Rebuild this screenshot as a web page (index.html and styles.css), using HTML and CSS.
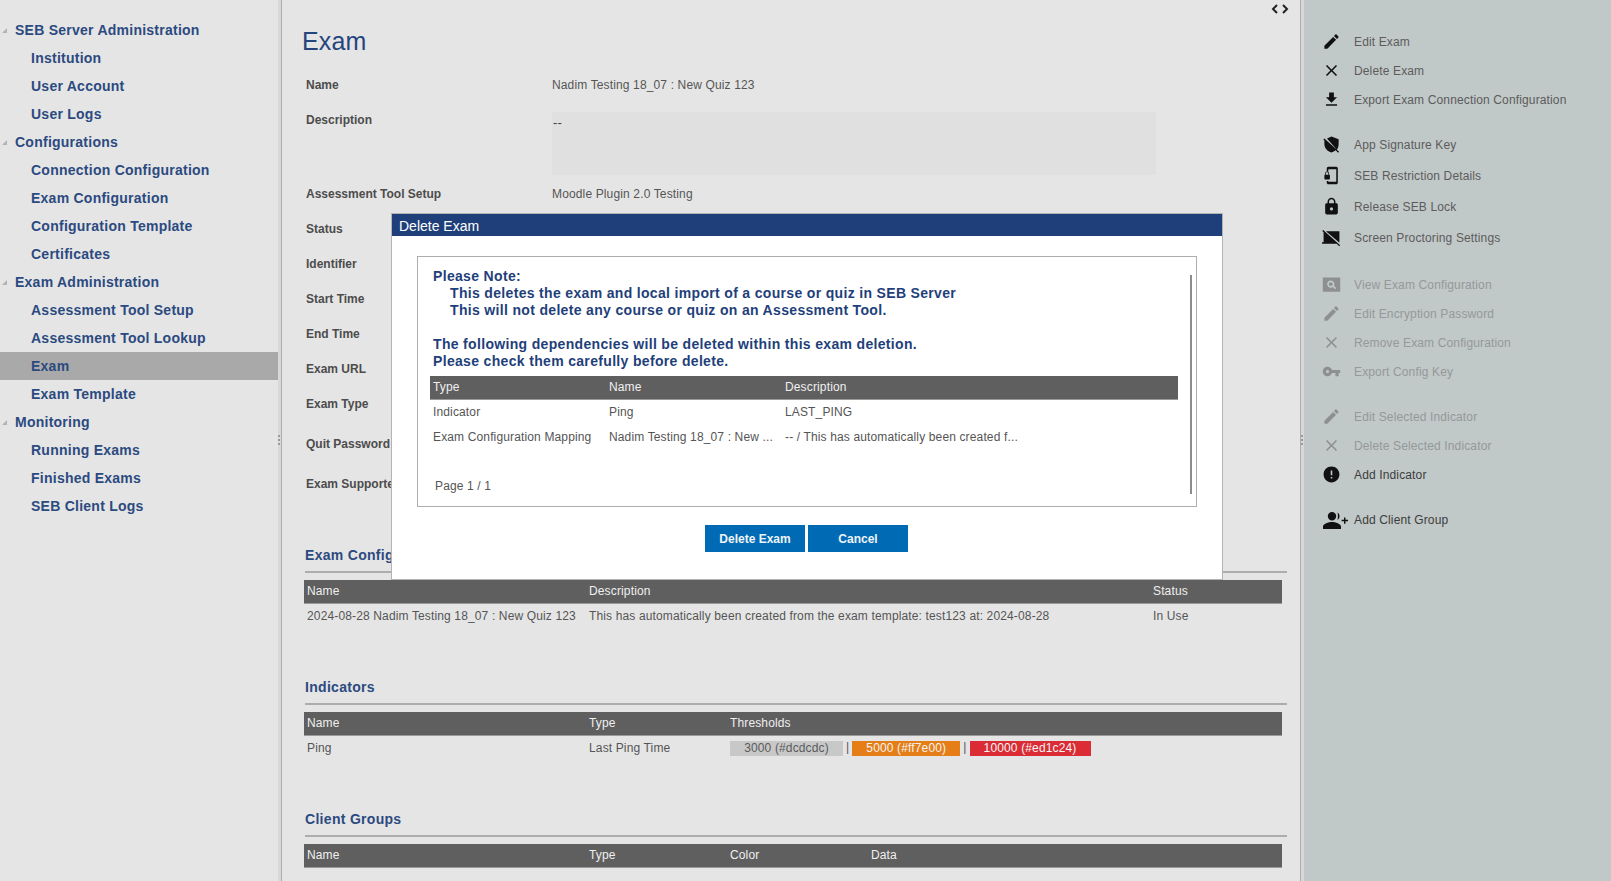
FILE: index.html
```html
<!DOCTYPE html>
<html lang="en">
<head>
    <meta charset="UTF-8">
    <title>SEB Server - Exam</title>
    <link rel="stylesheet" href="styles.css">
</head>
<body>
    <svg class="defs" width="0" height="0">
        <symbol id="i-edit" viewBox="0 0 24 24"><path d="M3 17.25V21h3.75L17.81 9.94l-3.75-3.75L3 17.25zM20.71 7.04c.39-.39.39-1.02 0-1.41l-2.34-2.34c-.39-.39-1.02-.39-1.41 0l-1.83 1.83 3.75 3.75 1.83-1.83z"/></symbol>
        <symbol id="i-close" viewBox="0 0 24 24"><path d="M19 6.41L17.59 5 12 10.59 6.41 5 5 6.41 10.59 12 5 17.59 6.41 19 12 13.41 17.59 19 19 17.59 13.41 12z"/></symbol>
        <symbol id="i-download" viewBox="0 0 24 24"><path d="M19 9h-4V3H9v6H5l7 7 7-7zM5 18v2h14v-2H5z"/></symbol>
        <symbol id="i-shield" viewBox="0 0 24 24"><path d="M12 2l9 3.5v6c0 2.800-.8 5.200-2.200 7.200L6.300 4.400zM3 4.300L1.700 5.600 3 7v4.500c0 5 3.800 9.500 9 10.500 2-.4 3.800-1.300 5.300-2.600l3 3 1.300-1.300z"/></symbol>
        <symbol id="i-phone" viewBox="0 0 24 24"><path d="M8 1h10c1.100 0 2 .9 2 2v18c0 1.100-.9 2-2 2H8c-1.100 0-2-.9-2-2v-2h2v1h10V4H8v3H6V3c0-1.100.9-2 2-2zM9 11V9.500C9 8.100 7.900 7 6.500 7S4 8.100 4 9.500V11c-.6 0-1 .4-1 1v4c0 .6.4 1 1 1h5c.6 0 1-.4 1-1v-4c0-.6-.4-1-1-1zM8 11H5V9.500C5 8.700 5.700 8 6.500 8S8 8.700 8 9.500z"/></symbol>
        <symbol id="i-lock" viewBox="0 0 24 24"><path d="M18 8h-1V6c0-2.760-2.240-5-5-5S7 3.240 7 6v2H6c-1.100 0-2 .9-2 2v10c0 1.100.9 2 2 2h12c1.100 0 2-.9 2-2V10c0-1.100-.9-2-2-2zm-6 9c-1.100 0-2-.9-2-2s.9-2 2-2 2 .9 2 2-.9 2-2 2zm3.100-9H8.900V6c0-1.710 1.390-3.100 3.100-3.100 1.710 0 3.100 1.390 3.100 3.100v2z"/></symbol>
        <symbol id="i-screen" viewBox="0 0 24 24"><path d="M1.500 2.500L.3 3.700 2 5.400V18H0v2h18.600l3.100 3 1.200-1.200zM5 4h17v14h-.6L5 4zm6 8.500l-3 4h6z"/></symbol>
        <symbol id="i-view" viewBox="0 0 24 24"><path d="M1 3h22v18H1zM11 7a4.500 4.500 0 1 0 2.700 8.100l2.800 2.800 1.400-1.400-2.800-2.800A4.500 4.500 0 0 0 11 7zm0 2a2.500 2.500 0 1 1 0 5 2.500 2.500 0 0 1 0-5z" fill-rule="evenodd"/></symbol>
        <symbol id="i-key" viewBox="0 0 24 24"><path d="M12.650 10C11.830 7.670 9.610 6 7 6c-3.310 0-6 2.690-6 6s2.690 6 6 6c2.610 0 4.830-1.670 5.650-4H17v4h4v-4h2v-4H12.650zM7 14c-1.100 0-2-.9-2-2s.9-2 2-2 2 .9 2 2-.9 2-2 2z"/></symbol>
        <symbol id="i-error" viewBox="0 0 24 24"><path d="M12 2C6.480 2 2 6.480 2 12s4.480 10 10 10 10-4.480 10-10S17.520 2 12 2zm1 15h-2v-2h2v2zm0-4h-2V7h2v6z"/></symbol>
        <symbol id="i-group" viewBox="0 0 26 24"><path d="M10 4a4.200 4.200 0 1 1 0 8.400A4.200 4.200 0 0 1 10 4zM1 21v-2.500C1 15.800 6.500 14 10 14s9 1.800 9 4.500V21zM15.500 4.500c1.300.8 2 2 2 3.700s-.7 2.900-2 3.700c.3-1.200.4-2.400.4-3.700s-.1-2.500-.4-3.700zM22 9.500h1.500v2.300H26v1.500h-2.500v2.400H22v-2.400h-2.400v-1.500H22z"/></symbol>
    </svg>

    <div class="app">
        <nav class="sidebar">
            <div class="nav-group">SEB Server Administration</div>
            <div class="nav-item">Institution</div>
            <div class="nav-item">User Account</div>
            <div class="nav-item">User Logs</div>
            <div class="nav-group">Configurations</div>
            <div class="nav-item">Connection Configuration</div>
            <div class="nav-item">Exam Configuration</div>
            <div class="nav-item">Configuration Template</div>
            <div class="nav-item">Certificates</div>
            <div class="nav-group">Exam Administration</div>
            <div class="nav-item">Assessment Tool Setup</div>
            <div class="nav-item">Assessment Tool Lookup</div>
            <div class="nav-item selected">Exam</div>
            <div class="nav-item">Exam Template</div>
            <div class="nav-group">Monitoring</div>
            <div class="nav-item">Running Exams</div>
            <div class="nav-item">Finished Exams</div>
            <div class="nav-item">SEB Client Logs</div>
        </nav>

        <div class="sash sash-left"><span class="grip"></span></div>

        <main class="content">
            <div class="pager">
                <svg viewBox="0 0 8 10" width="8" height="10"><polyline points="6,1 2,5 6,9"/></svg>
                <svg viewBox="0 0 8 10" width="8" height="10"><polyline points="2,1 6,5 2,9"/></svg>
            </div>
            <h1>Exam</h1>

            <div class="form">
                <div class="field"><label>Name</label><span>Nadim Testing 18_07 : New Quiz 123</span></div>
                <div class="field field-desc"><label>Description</label><div class="textbox">--</div></div>
                <div class="field"><label>Assessment Tool Setup</label><span>Moodle Plugin 2.0 Testing</span></div>
                <div class="field"><label>Status</label></div>
                <div class="field"><label>Identifier</label></div>
                <div class="field"><label>Start Time</label></div>
                <div class="field"><label>End Time</label></div>
                <div class="field"><label>Exam URL</label></div>
                <div class="field"><label>Exam Type</label></div>
                <div class="field field-tall"><label>Quit Password</label></div>
                <div class="field"><label>Exam Supporter</label></div>
            </div>

            <section class="block">
                <h2>Exam Configuration</h2>
                <table class="grid">
                    <colgroup><col class="c-282"><col class="c-564"><col></colgroup>
                    <thead><tr><th>Name</th><th>Description</th><th>Status</th></tr></thead>
                    <tbody><tr>
                        <td>2024-08-28 Nadim Testing 18_07 : New Quiz 123</td>
                        <td>This has automatically been created from the exam template: test123 at: 2024-08-28</td>
                        <td>In Use</td>
                    </tr></tbody>
                </table>
            </section>

            <section class="block">
                <h2>Indicators</h2>
                <table class="grid">
                    <colgroup><col class="c-282"><col class="c-141"><col></colgroup>
                    <thead><tr><th>Name</th><th>Type</th><th>Thresholds</th></tr></thead>
                    <tbody><tr>
                        <td>Ping</td>
                        <td>Last Ping Time</td>
                        <td class="thresholds">
                            <span class="badge badge-grey">3000 (#dcdcdc)</span><i>|</i><span class="badge badge-orange">5000 (#ff7e00)</span><i>|</i><span class="badge badge-red">10000 (#ed1c24)</span>
                        </td>
                    </tr></tbody>
                </table>
            </section>

            <section class="block">
                <h2>Client Groups</h2>
                <table class="grid">
                    <colgroup><col class="c-282"><col class="c-141"><col class="c-141"><col></colgroup>
                    <thead><tr><th>Name</th><th>Type</th><th>Color</th><th>Data</th></tr></thead>
                </table>
            </section>
        </main>

        <div class="sash sash-right"><span class="grip"></span></div>

        <aside class="actions">
            <div class="action-group">
                <div class="action"><svg><use href="#i-edit"/></svg>Edit Exam</div>
                <div class="action"><svg><use href="#i-close"/></svg>Delete Exam</div>
                <div class="action"><svg><use href="#i-download"/></svg>Export Exam Connection Configuration</div>
            </div>
            <div class="action-group wide">
                <div class="action"><svg><use href="#i-shield"/></svg>App Signature Key</div>
                <div class="action"><svg><use href="#i-phone"/></svg>SEB Restriction Details</div>
                <div class="action"><svg><use href="#i-lock"/></svg>Release SEB Lock</div>
                <div class="action"><svg><use href="#i-screen"/></svg>Screen Proctoring Settings</div>
            </div>
            <div class="action-group off">
                <div class="action"><svg><use href="#i-view"/></svg>View Exam Configuration</div>
                <div class="action"><svg><use href="#i-edit"/></svg>Edit Encryption Password</div>
                <div class="action"><svg><use href="#i-close"/></svg>Remove Exam Configuration</div>
                <div class="action"><svg><use href="#i-key"/></svg>Export Config Key</div>
            </div>
            <div class="action-group">
                <div class="action off"><svg><use href="#i-edit"/></svg>Edit Selected Indicator</div>
                <div class="action off"><svg><use href="#i-close"/></svg>Delete Selected Indicator</div>
                <div class="action strong"><svg><use href="#i-error"/></svg>Add Indicator</div>
            </div>
            <div class="action-group">
                <div class="action strong"><svg class="icon-group"><use href="#i-group"/></svg>Add Client Group</div>
            </div>
        </aside>
    </div>

    <div class="dialog">
        <div class="dialog-title">Delete Exam</div>
        <div class="dialog-body">
            <div class="dialog-box">
                <span class="scrollbar"></span>
                <div class="note">
                    <p>Please Note:</p>
                    <p class="indent">This deletes the exam and local import of a course or quiz in SEB Server</p>
                    <p class="indent">This will not delete any course or quiz on an Assessment Tool.</p>
                    <p>&nbsp;</p>
                    <p>The following dependencies will be deleted within this exam deletion.</p>
                    <p>Please check them carefully before delete.</p>
                </div>
                <table class="grid dep-table">
                    <colgroup><col class="c-176"><col class="c-176"><col></colgroup>
                    <thead><tr><th>Type</th><th>Name</th><th>Description</th></tr></thead>
                    <tbody>
                        <tr><td>Indicator</td><td>Ping</td><td>LAST_PING</td></tr>
                        <tr><td>Exam Configuration Mapping</td><td>Nadim Testing 18_07 : New ...</td><td>-- / This has automatically been created f...</td></tr>
                    </tbody>
                </table>
                <div class="page-info">Page 1 / 1</div>
            </div>
            <div class="dialog-buttons">
                <button>Delete Exam</button>
                <button class="cancel">Cancel</button>
            </div>
        </div>
    </div>
</body>
</html>
```

FILE: styles.css
```css
:root {
    --pane: #e5e5e5;
    --navy: #2b4a80;
    --text: #555;
    --rule: #adadad;
}

html, body {
    margin: 0;
    height: 100%;
    overflow: hidden;
}

body {
    font-family: "Liberation Sans", Arial, sans-serif;
    font-size: 12px;
    letter-spacing: 0.14px;
    color: var(--text);
    background-color: var(--pane);
}

.defs {
    position: absolute;
}

.app {
    display: flex;
    height: 881px;
}

/* left navigation */
.sidebar {
    width: 278px;
    flex: none;
    padding-top: 16px;
    box-sizing: border-box;
    font-size: 14px;
    font-weight: 700;
    letter-spacing: 0.25px;
    color: var(--navy);
}

.nav-group, .nav-item {
    height: 28px;
    line-height: 28px;
    white-space: nowrap;
}

.nav-group {
    display: flex;
    align-items: center;
    padding-left: 2px;
}

.nav-group::before {
    content: "";
    width: 0;
    height: 0;
    margin-right: 8px;
    border-style: solid;
    border-width: 0 0 5px 5px;
    border-color: transparent transparent #b4b4b4 transparent;
}

.nav-item {
    padding-left: 31px;
}

.nav-item.selected {
    background-color: #a9a9a9;
}

.sash {
    flex: none;
    display: flex;
    align-items: center;
    background-color: #d8d8d8;
}

.sash-left {
    width: 3px;
    border-right: 1px solid var(--rule);
}

.sash-right {
    width: 3px;
    border-left: 1px solid var(--rule);
}

.grip {
    width: 2px;
    height: 10px;
    margin-top: -1px;
    background-image: linear-gradient(#9a9a9a 2px, transparent 2px);
    background-size: 2px 4px;
}

/* center pane */
.content {
    position: relative;
    width: 1018px;
    flex: none;
    overflow: hidden;
}

.pager {
    position: absolute;
    top: 4px;
    left: 989px;
    display: flex;
    gap: 2px;
}

.pager polyline {
    fill: none;
    stroke: #222;
    stroke-width: 2;
}

h1 {
    margin: 0;
    padding: 26px 0 0 20px;
    height: 41px;
    font-size: 25px;
    font-weight: 400;
    line-height: 30px;
    color: #26457c;
}

.form {
    padding-left: 24px;
}

.field {
    display: flex;
    align-items: center;
    height: 35px;
}

.field label {
    width: 246px;
    flex: none;
    font-weight: 700;
    letter-spacing: 0;
    color: #4c4c4c;
}

.field-desc {
    height: 74px;
    align-items: flex-start;
}

.field-desc label {
    padding-top: 11px;
}

.field-tall {
    height: 45px;
}

.textbox {
    width: 604px;
    height: 63px;
    margin-top: 10px;
    padding: 3px 0 0 1px;
    box-sizing: border-box;
    background-color: #e0e0e0;
    font-size: 13px;
    line-height: 15px;
    color: #444;
}

.block {
    height: 132px;
    margin-left: 22px;
}

.form + .block {
    margin-top: 44px;
}

h2 {
    margin: 0 0 7px 1px;
    width: 982px;
    height: 19px;
    padding-bottom: 7px;
    font-size: 14px;
    line-height: 20px;
    font-weight: 700;
    letter-spacing: 0.3px;
    color: var(--navy);
    border-bottom: 2px solid var(--rule);
}

/* tables */
table.grid {
    width: 978px;
    border-collapse: collapse;
    table-layout: fixed;
}

.grid th {
    height: 23px;
    padding: 0 3px;
    box-sizing: border-box;
    background-color: #5f5f5f;
    border-bottom: 1px solid #9a9a9a;
    text-align: left;
    font-weight: 400;
    color: #f0f0f0;
}

.grid td {
    height: 25px;
    padding: 0 3px;
    white-space: nowrap;
    overflow: hidden;
}

.c-282 { width: 282px; }
.c-564 { width: 564px; }
.c-141 { width: 141px; }
.c-176 { width: 176px; }

.thresholds i {
    font-style: normal;
    padding: 0 3px;
}

.badge {
    display: inline-block;
    height: 15px;
    line-height: 15px;
    text-align: center;
    vertical-align: middle;
}

.badge-grey {
    width: 113px;
    background-color: #c8c8c8;
    color: #5a5a5a;
}

.badge-orange {
    width: 108px;
    background-color: #e67e17;
    color: #f4f4f4;
}

.badge-red {
    width: 121px;
    background-color: #db2c36;
    color: #f4f4f4;
}

/* right action pane */
.actions {
    flex: 1;
    background-color: #c1c8c8;
    padding-top: 27px;
}

.action-group {
    margin-bottom: 16px;
}

.action-group:first-child {
    margin-bottom: 15px;
}

.action-group.wide {
    margin-bottom: 17px;
}

.action {
    display: flex;
    align-items: center;
    height: 29px;
    padding-left: 18px;
    color: #5c5c5c;
    white-space: nowrap;
}

.wide .action {
    height: 31px;
}

.action svg {
    width: 19px;
    height: 19px;
    flex: none;
    margin-right: 13px;
    fill: #111;
}

.action svg.icon-group {
    width: 26px;
    height: 24px;
    margin-right: 6px;
}

.off .action, .action.off {
    color: #949999;
}

.off .action svg, .action.off svg {
    fill: #8e9090;
}

.action.strong {
    color: #3c3c3c;
}

/* modal */
.dialog {
    position: absolute;
    left: 391px;
    top: 213px;
    width: 830px;
    height: 365px;
    background-color: #fff;
    border: 1px solid #b4b4b4;
}

.dialog-title {
    height: 22px;
    padding-left: 7px;
    background-color: #1f3f7a;
    color: #fff;
    font-size: 14px;
    letter-spacing: 0;
    line-height: 24px;
}

.dialog-body {
    padding: 20px 25px 0;
}

.dialog-box {
    position: relative;
    height: 251px;
    box-sizing: border-box;
    border: 1px solid var(--rule);
    padding: 11px 0 0 12px;
}

.scrollbar {
    position: absolute;
    top: 18px;
    right: 4px;
    width: 2px;
    height: 219px;
    background-color: #8d8d8d;
}

.note {
    padding-left: 3px;
    font-size: 14px;
    line-height: 17px;
    font-weight: 700;
    letter-spacing: 0.33px;
    color: #1f3f7a;
}

.note p {
    margin: 0;
}

.note .indent {
    padding-left: 17px;
}

table.dep-table {
    width: 748px;
    margin-top: 6px;
}

.dep-table td {
    height: 25px;
}

.page-info {
    margin: 29px 0 0 5px;
    line-height: 14px;
}

.dialog-buttons {
    display: flex;
    justify-content: center;
    gap: 3px;
    margin-top: 18px;
    padding-right: 1px;
}

.dialog-buttons button {
    width: 100px;
    height: 27px;
    padding: 0;
    border: 0;
    background-color: #006bb4;
    color: #eef4f8;
    font-family: inherit;
    font-size: 12px;
    font-weight: 700;
}
```
